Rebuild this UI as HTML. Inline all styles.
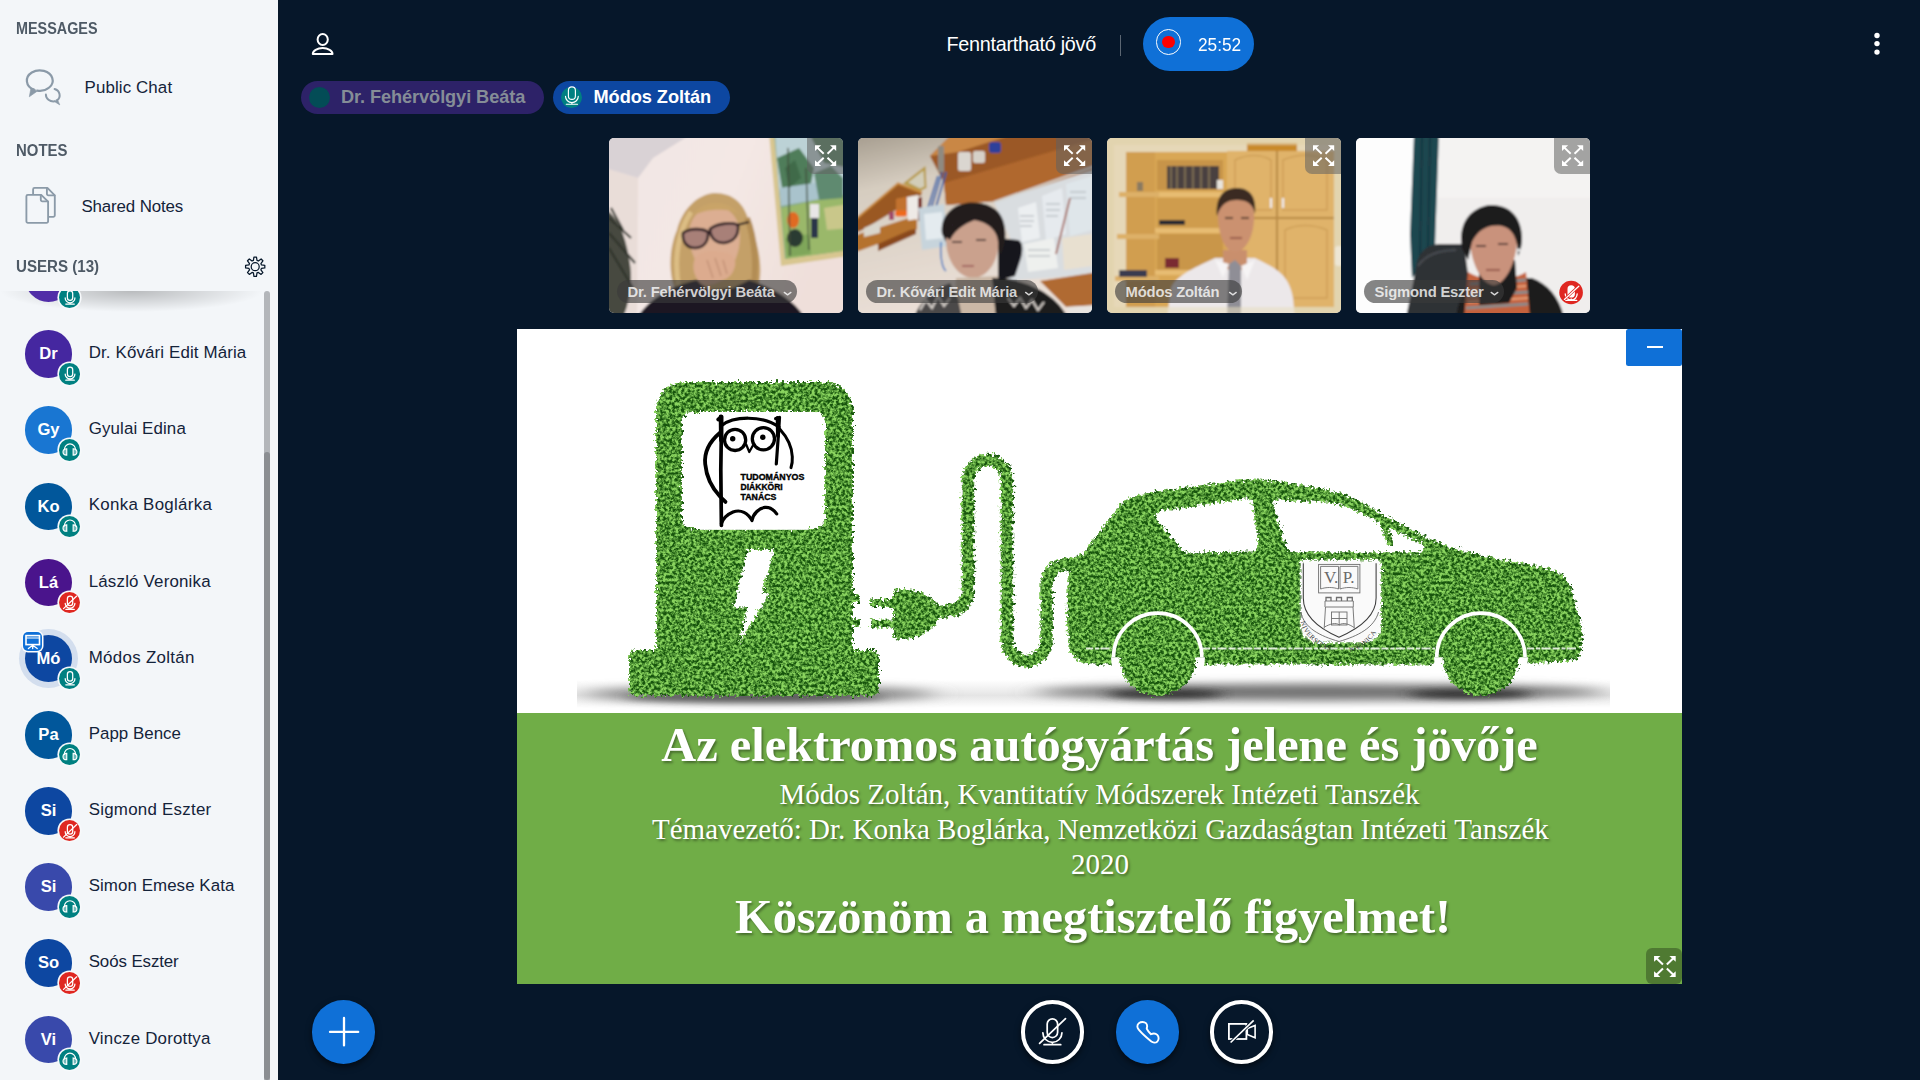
<!DOCTYPE html>
<html lang="hu"><head><meta charset="utf-8"><title>Fenntartható jövő</title>
<style>
*{box-sizing:border-box;margin:0;padding:0}
html,body{width:1920px;height:1080px;overflow:hidden;background:#06172A;font-family:"Liberation Sans",sans-serif}
.t{position:absolute;white-space:nowrap;transform-origin:0 50%;line-height:1}
.sans{font-family:"Liberation Sans",sans-serif}
.serif{font-family:"Liberation Serif",serif}
.abs{position:absolute}
#side{position:absolute;left:0;top:0;width:278px;height:1080px;background:#f3f6f9;overflow:hidden}
#ulist{position:absolute;left:0;top:291px;width:278px;height:789px;overflow:hidden;background:radial-gradient(farthest-side at 50% 0,rgba(0,0,0,.24),rgba(0,0,0,0)) 0 0/263px 21px no-repeat}
.av{position:absolute;left:24.75px;width:47.5px;height:47.5px;border-radius:50%;color:#fff;font-weight:700;font-size:16.6px;line-height:47.5px;text-align:center}
.bd{position:absolute;left:58.85px;width:21.4px;height:21.4px;border-radius:50%;box-shadow:0 0 0 1.6px #f7f9fb}
.teal{background:#008081}.red{background:#df2721}
.ab{position:absolute;top:1000.25px;width:63.3px;height:63.3px;border-radius:50%;box-shadow:0 3px 6px rgba(0,0,0,.55)}
.vid{position:absolute;top:138px;width:234px;height:175px;border-radius:5px;overflow:hidden}
.vid svg{position:absolute;left:0;top:0}
.fsb{position:absolute;right:0;top:0;width:36px;height:36px;background:rgba(96,96,96,.55);border-radius:0 0 0 7px}
.tag{position:absolute;left:8px;top:141.9px;height:23.5px;border-radius:12px;background:rgba(58,58,58,.62)}
#ovl{position:absolute;left:0;top:0;pointer-events:none}
</style></head><body>
<div id="side">
<div class="t sans" style="left:15.80px;top:21px;font-size:16.8px;font-weight:700;color:#4e5a66;transform:scaleX(0.857);">MESSAGES</div><div class="t sans" style="left:84.60px;top:80px;font-size:16.9px;font-weight:400;color:#14233a;letter-spacing:0.11px;">Public Chat</div><div class="t sans" style="left:15.80px;top:143px;font-size:16.8px;font-weight:700;color:#4e5a66;transform:scaleX(0.89);">NOTES</div><div class="t sans" style="left:81.40px;top:199px;font-size:16.9px;font-weight:400;color:#14233a;letter-spacing:-0.13px;">Shared Notes</div><div class="t sans" style="left:15.80px;top:259px;font-size:16.8px;font-weight:700;color:#4e5a66;transform:scaleX(0.9);">USERS (13)</div>
<div id="ulist">
<div class="av" style="top:-36.90px;background:#512da8"></div><div class="bd teal" style="top:-3.95px"></div>
<div class="av" style="top:39.25px;background:#4527a0">Dr</div><div class="bd teal" style="top:72.20px"></div><div class="t sans" style="left:88.70px;top:54px;font-size:16.9px;font-weight:400;color:#14233a;letter-spacing:0.135px;">Dr. Kővári Edit Mária</div>
<div class="av" style="top:115.40px;background:#1976d2">Gy</div><div class="bd teal" style="top:148.35px"></div><div class="t sans" style="left:88.70px;top:130px;font-size:16.9px;font-weight:400;color:#14233a;letter-spacing:0.12px;">Gyulai Edina</div>
<div class="av" style="top:191.55px;background:#01579b">Ko</div><div class="bd teal" style="top:224.50px"></div><div class="t sans" style="left:88.70px;top:206px;font-size:16.9px;font-weight:400;color:#14233a;letter-spacing:0.3px;">Konka Boglárka</div>
<div class="av" style="top:267.70px;background:#4a148c">Lá</div><div class="bd red" style="top:300.65px"></div><div class="t sans" style="left:88.70px;top:283px;font-size:16.9px;font-weight:400;color:#14233a;letter-spacing:0.19px;">László Veronika</div>
<div class="abs" style="left:18.9px;top:338.10px;width:59px;height:59px;border-radius:50%;background:#d3deee"></div><div class="av" style="top:343.85px;background:#0d47a1">Mó</div><div class="bd teal" style="top:376.80px"></div><div class="abs" style="left:22.8px;top:340.80px;width:19.3px;height:19.3px;border-radius:5px;background:#0f70d7;box-shadow:0 0 0 1.5px #fbfcfd"></div><div class="t sans" style="left:88.70px;top:359px;font-size:16.9px;font-weight:400;color:#14233a;letter-spacing:0.3px;">Módos Zoltán</div>
<div class="av" style="top:420.00px;background:#01579b">Pa</div><div class="bd teal" style="top:452.95px"></div><div class="t sans" style="left:88.70px;top:435px;font-size:16.9px;font-weight:400;color:#14233a;letter-spacing:0.02px;">Papp Bence</div>
<div class="av" style="top:496.15px;background:#0d47a1">Si</div><div class="bd red" style="top:529.10px"></div><div class="t sans" style="left:88.70px;top:511px;font-size:16.9px;font-weight:400;color:#14233a;letter-spacing:0.25px;">Sigmond Eszter</div>
<div class="av" style="top:572.30px;background:#3949ab">Si</div><div class="bd teal" style="top:605.25px"></div><div class="t sans" style="left:88.70px;top:587px;font-size:16.9px;font-weight:400;color:#14233a;letter-spacing:0.07px;">Simon Emese Kata</div>
<div class="av" style="top:648.45px;background:#0d47a1">So</div><div class="bd red" style="top:681.40px"></div><div class="t sans" style="left:88.70px;top:663px;font-size:16.9px;font-weight:400;color:#14233a;letter-spacing:-0.1px;">Soós Eszter</div>
<div class="av" style="top:724.60px;background:#3949ab">Vi</div><div class="bd teal" style="top:757.55px"></div><div class="t sans" style="left:88.70px;top:740px;font-size:16.9px;font-weight:400;color:#14233a;letter-spacing:0.2px;">Vincze Dorottya</div>
</div>
<div class="abs" style="left:263.5px;top:291px;width:6.5px;height:789px;background:#b3b6ba;border-radius:4px 4px 0 0"></div><div class="abs" style="left:263.5px;top:452px;width:6.5px;height:628px;background:#8b8e92;border-radius:4px"></div>
</div>
<div class="t sans" style="left:946.50px;top:35px;font-size:19.8px;font-weight:400;color:#fff;letter-spacing:-0.27px;">Fenntartható jövő</div><div class="abs" style="left:1119.8px;top:35px;width:1.3px;height:21px;background:#5b6672"></div><div class="abs" style="left:1143px;top:17px;width:111px;height:54px;border-radius:27px;background:#0f70d7"></div><div class="abs" style="left:1155.5px;top:29.2px;width:25.5px;height:25.5px;border-radius:50%;border:1.6px solid #fff"></div><div class="abs" style="left:1161.8px;top:35.5px;width:12.8px;height:12.8px;border-radius:50%;background:#ff0000"></div><div class="t sans" style="left:1198.00px;top:35px;font-size:19.2px;font-weight:400;color:#fff;transform:scaleX(0.9);">25:52</div>
<div class="abs" style="left:301px;top:81px;width:243px;height:33px;border-radius:16.5px;background:#2d2268"></div><div class="abs" style="left:309px;top:87px;width:21px;height:21px;border-radius:50%;background:#034c56"></div><div class="t sans" style="left:341.00px;top:88px;font-size:18.2px;font-weight:700;color:#858d97;letter-spacing:-0.085px;">Dr. Fehérvölgyi Beáta</div><div class="abs" style="left:553px;top:81px;width:177px;height:33px;border-radius:16.5px;background:#0d47a1"></div><div class="abs" style="left:561px;top:87.3px;width:20.8px;height:20.8px;border-radius:50%;background:#008081"></div><div class="t sans" style="left:593.50px;top:88px;font-size:18.2px;font-weight:700;color:#fff;letter-spacing:-0.046px;">Módos Zoltán</div>
<div class="vid" id="v0" style="left:609px;background:#ddd"><svg width="234" height="175" viewBox="0 0 234 175"><defs><filter id="vb0" x="-5%" y="-5%" width="110%" height="110%"><feGaussianBlur stdDeviation="1.1"/></filter><linearGradient id="w0" x1="0" y1="0" x2="1" y2="0.3"><stop offset="0" stop-color="#f1e6e4"/><stop offset=".55" stop-color="#f4e8e5"/><stop offset="1" stop-color="#efdfda"/></linearGradient></defs><g filter="url(#vb0)"><rect x="-5" y="-5" width="244" height="185" fill="url(#w0)"/><path d="M-5,-5H84L44,20L29,40L-5,30Z" fill="#d9d2d5"/><path d="M-5,30L29,40L28,180L-5,180Z" fill="#e9ddd8"/><path d="M160,-5H240V118L172,128Z" fill="#d8c690"/><path d="M165,-5H240V112L176,121Z" fill="#86a98a"/><path d="M166,-5H240V40L170,52Z" fill="#bcd2d6"/><path d="M168,20L190,10L205,30L200,55L175,62Z" fill="#4f7d5a"/><path d="M200,-5L240,-5V30L215,25Z" fill="#56805e"/><path d="M172,70L240,55V112L177,121Z" fill="#9ab86a"/><path d="M170,50L240,40V56L172,68Z" fill="#a9c3cc"/><path d="M205,35L222,28L234,40V60L210,62Z" fill="#5f8a70"/><path d="M176,30L186,22L192,40L180,50Z" fill="#3f6a4a"/><path d="M215,70L240,66V90L218,92Z" fill="#c9c78a"/><path d="M176,100L200,96L202,116L178,119Z" fill="#7fa65a"/><ellipse cx="184" cy="82" rx="6" ry="8" fill="#e06a22"/><ellipse cx="186" cy="100" rx="8" ry="9" fill="#2c3a30"/><rect x="201" y="66" width="9" height="14" fill="#e9e6e6"/><rect x="202" y="80" width="7" height="20" fill="#2b3448"/><path d="M179,10L181,118M197,30L200,112" stroke="#3f4a3a" stroke-width="1.3" fill="none"/><path d="M-5,70C8,78 16,95 20,120C24,140 22,160 14,180H-5Z" fill="#474a40"/><path d="M0,80L22,100M0,95L26,125M0,110L24,150M2,70L14,92" stroke="#2f332b" stroke-width="2.2" fill="none"/><path d="M70,160C58,140 60,110 68,92C73,72 88,56 106,55C124,55 136,66 140,84C147,100 153,120 151,140C150,150 148,156 145,160Z" fill="#c4a068"/><path d="M70,150C64,120 70,92 82,74" stroke="#dcbd84" stroke-width="5" fill="none"/><path d="M138,80C146,100 148,130 144,152" stroke="#b38d55" stroke-width="6" fill="none"/><path d="M80,96C80,80 92,68 106,68C120,68 131,80 131,98C131,118 122,136 108,138C93,138 80,118 80,96Z" fill="#dcae92"/><path d="M84,78C92,62 118,60 130,76C120,70 96,70 84,78Z" fill="#c9a468"/><path d="M74,95C80,90 94,90 99,94C100,104 94,110 86,110C78,110 73,104 74,95Z" fill="#a88078" stroke="#2a1c24" stroke-width="2.6"/><path d="M101,91C108,85 124,84 129,87C130,98 124,104 115,105C107,105 101,100 101,91Z" fill="#a88078" stroke="#2a1c24" stroke-width="2.6"/><path d="M128,87L140,84" stroke="#241820" stroke-width="2"/><path d="M28,180C40,160 66,146 88,142L100,152L124,150L140,142C160,148 184,160 196,180Z" fill="#1d1822"/><path d="M86,120C92,112 104,112 112,114C122,114 128,120 126,128C124,136 120,140 114,142C106,146 98,150 92,146C86,140 82,130 86,120Z" fill="#dcab8e"/><path d="M98,122L104,140M106,120L112,138M114,122L118,136" stroke="#c08f74" stroke-width="1.2" fill="none"/></g></svg><div class="fsb"></div><div class="tag" style="width:179.7px"></div><div class="t sans" style="left:18.60px;top:147px;font-size:14.8px;font-weight:700;color:rgba(255,255,255,.78);letter-spacing:-0.2px;">Dr. Fehérvölgyi Beáta</div></div>
<div class="vid" id="v1" style="left:858px;background:#ddd"><svg width="234" height="175" viewBox="0 0 234 175"><defs><filter id="vb1" x="-5%" y="-5%" width="110%" height="110%"><feGaussianBlur stdDeviation="1.0"/></filter><linearGradient id="w1" x1="0" y1="0" x2="0.3" y2="1"><stop offset="0" stop-color="#a39a8c"/><stop offset=".3" stop-color="#d6cdc0"/><stop offset="1" stop-color="#ebe0d8"/></linearGradient></defs><g filter="url(#vb1)"><rect x="-5" y="-5" width="244" height="185" fill="url(#w1)"/><path d="M136,64L240,30V136L150,143L152,100Z" fill="#d9dde0"/><path d="M160,70L178,64L182,100L164,104Z" fill="#eceff1"/><path d="M184,58L204,50L208,96L188,102Z" fill="#e6eaee"/><path d="M208,46L234,38V92L212,98Z" fill="#dfe6ea"/><path d="M166,106L196,100L200,130L170,134Z" fill="#eef0ee"/><path d="M204,100L234,96V128L206,132Z" fill="#e8e0d0"/><path d="M212,60L198,116" stroke="#9a4a3a" stroke-width="1.5"/><path d="M162,78h14M162,83h14M162,88h12M188,66h14M188,72h14M188,78h12M212,54h16M212,60h16M170,112h22M170,118h22" stroke="#a9b0b6" stroke-width="1"/><path d="M72,18L92,-2H240V30L138,63L88,67L86,45Z" fill="#9b5926"/><path d="M86,45L240,0V30L138,63L88,67Z" fill="#b0682e"/><path d="M72,18L92,-2H150L100,14Z" fill="#c98744"/><path d="M136,64L240,27" stroke="#d5d2cc" stroke-width="2"/><rect x="100" y="14" width="13" height="19" rx="2" fill="#dad6d0"/><rect x="115" y="13" width="12" height="12" rx="2" fill="#d6d0c8"/><rect x="131" y="4" width="12" height="11" rx="3" fill="#2e3f9a"/><rect x="80" y="8" width="6" height="26" fill="#8f8a80"/><path d="M45,45.5L67.5,28L68.5,50L62,53Z" fill="#b79a44"/><path d="M50,44.5L65.5,32.5L66.5,48.5L62,50.5Z" fill="#d2cdb8"/><path d="M-2,81L40,45.4L64,54.6L63,57.5L39,61L38,72L8,90L-2,95Z" fill="#9a5822"/><path d="M-2,81L40,45.4L64,54.6" stroke="#c98a3c" stroke-width="2.2" fill="none"/><path d="M38,61L49,58.5V77L38,72.5Z" fill="#c2722e"/><path d="M-2,97L54,79L59,82V91L52,96L20,113V106L-2,114Z" fill="#b5722f"/><path d="M20,106L52,92L58,91V96L20,113Z" fill="#8a4a1e"/><rect x="37" y="72.5" width="12" height="6" rx="2" fill="#ef6a1c"/><rect x="31" y="74" width="5" height="8" fill="#a04a6a"/><path d="M6,90L22,83V95L6,99Z" fill="#d9d6cc"/><path d="M49,59L60,57V81L50,82.5Z" fill="#eeeae6"/><path d="M60,60L64,59V82L60,83Z" fill="#7a2a20"/><path d="M84,34L72,74M88,34L76,76M80,38L70,70" stroke="#2f5fa8" stroke-width="1.8" fill="none"/><path d="M60,70L86,66L90,108L64,112Z" fill="#c7d4dc"/><path d="M66,76L84,74L86,100L68,102Z" fill="#e4ebef"/><path d="M83,104C82,118 84,130 88,133" stroke="#2f6fc0" stroke-width="1.4" fill="none"/><path d="M140,100L160,102C165,104 165,112 163,120L157,138L140,143Z" fill="#15151a"/><path d="M84,96C82,80 92,68 108,65C124,63 140,68 145,82C149,94 148,108 142,118L138,100C134,88 124,82 110,84C98,86 90,92 88,104Z" fill="#211d1f"/><path d="M88,102C88,90 98,82 112,82C126,82 139,90 140,104C141,120 132,138 116,140C100,140 88,122 88,102Z" fill="#caa18d"/><path d="M86,98C92,84 108,78 122,80C110,84 98,90 92,102Z" fill="#211d1f"/><path d="M94,104h10M118,102h10" stroke="#3a2a2a" stroke-width="1.6"/><path d="M104,128h12" stroke="#9a5a58" stroke-width="1.6"/><path d="M98,140L140,138L150,180H96Z" fill="#cbb8a6"/><path d="M56,180C60,165 76,150 92,145L100,160L104,180Z" fill="#4c4848"/><path d="M134,140L150,141C172,145 198,156 210,180H138Z" fill="#1c1a1d"/><path d="M62,172l6,-10l6,8l6,-12l6,10l6,-8M150,160l6,8l6,-8l6,10l6,-8l6,10l6,-8" stroke="#d8d2cc" stroke-width="2" fill="none"/><path d="M182,143L240,134V167L208,169Z" fill="#b06a30"/><path d="M208,169L240,167V180H215Z" fill="#e8e4e0"/></g></svg><div class="fsb"></div><div class="tag" style="width:172px"></div><div class="t sans" style="left:18.60px;top:147px;font-size:14.8px;font-weight:700;color:rgba(255,255,255,.78);letter-spacing:-0.2px;">Dr. Kővári Edit Mária</div></div>
<div class="vid" id="v2" style="left:1107px;background:#ddd"><svg width="234" height="175" viewBox="0 0 234 175"><defs><filter id="vb2" x="-5%" y="-5%" width="110%" height="110%"><feGaussianBlur stdDeviation="1.0"/></filter></defs><g filter="url(#vb2)"><rect x="-5" y="-5" width="244" height="185" fill="#dcc99c"/><rect x="7" y="7" width="220" height="162" fill="#e6d8b8"/><rect x="19" y="14" width="101" height="155" fill="#d9a755"/><rect x="50" y="22" width="66" height="30" fill="#c79448"/><rect x="60" y="28" width="52" height="23" fill="#4a4040"/><path d="M64,28v23M70,28v23M78,28v23M86,28v23M94,28v23M102,28v23" stroke="#8a7a5a" stroke-width="1.5"/><rect x="110" y="42" width="6" height="9" fill="#e8e4dc"/><rect x="19" y="54" width="101" height="5" fill="#e7bc72"/><rect x="19" y="90" width="101" height="5" fill="#e7bc72"/><rect x="19" y="132" width="101" height="5" fill="#e7bc72"/><rect x="50" y="60" width="66" height="30" fill="#cf9c4e"/><rect x="50" y="96" width="66" height="36" fill="#c9964a"/><path d="M19,14H48V169H19Z" fill="#d19e50"/><rect x="12" y="54" width="40" height="5" fill="#ddb068"/><rect x="10" y="96" width="42" height="5" fill="#ddb068"/><rect x="8" y="138" width="44" height="5" fill="#ddb068"/><rect x="52" y="82" width="26" height="5" fill="#2a2a30"/><rect x="58" y="120" width="14" height="10" fill="#7a2a30"/><rect x="12" y="132" width="28" height="7" fill="#3a3a50"/><rect x="30" y="44" width="6" height="9" fill="#8a7a60"/><rect x="120" y="13" width="107" height="156" fill="#e0b36a"/><path d="M170,13V169M120,80H227" stroke="#b98a45" stroke-width="2"/><path d="M128,22C140,16 154,16 164,22V72H128Z" fill="none" stroke="#cfa058" stroke-width="1.5"/><path d="M176,22C190,16 206,16 220,22V72H176Z" fill="none" stroke="#cfa058" stroke-width="1.5"/><path d="M178,92C190,86 206,86 220,92V160H178Z" fill="none" stroke="#cfa058" stroke-width="1.5"/><rect x="140" y="5" width="50" height="8" fill="#c98a2c"/><path d="M164,60v10M176,60v10" stroke="#f0f0f0" stroke-width="2"/><path d="M60,180L64,150C70,136 92,128 108,120L148,120C168,130 182,136 186,160L188,180Z" fill="#ece8ea"/><path d="M116,112H140V128L128,136L116,128Z" fill="#c98f6d"/><path d="M111,80C110,64 118,54 129,54C141,54 148,64 147,82C146,100 138,114 128,114C118,114 112,98 111,80Z" fill="#cb9170"/><path d="M110,78C108,60 116,50 130,50C142,50 150,58 148,76C146,66 140,62 130,62C120,62 114,66 110,78Z" fill="#3a2a22"/><path d="M118,80h8M134,80h8" stroke="#3a2a22" stroke-width="1.5"/><path d="M123,100h12" stroke="#8a4a40" stroke-width="1.5"/><path d="M122,126L128,122L134,128L134,180H120Z" fill="#8f8e96"/><path d="M108,122L122,126L116,140ZM148,122L134,128L140,142Z" fill="#f6f4f5"/><rect x="228" y="108" width="8" height="20" rx="3" fill="#f4f2ee"/><path d="M-5,-5H239V180H-5ZM7,7V169H227V7Z" fill="#e8dcc0" fill-opacity=".55" fill-rule="evenodd"/></g></svg><div class="fsb"></div><div class="tag" style="width:127px"></div><div class="t sans" style="left:18.60px;top:147px;font-size:14.8px;font-weight:700;color:rgba(255,255,255,.78);letter-spacing:-0.2px;">Módos Zoltán</div></div>
<div class="vid" id="v3" style="left:1356px;background:#ddd"><svg width="234" height="175" viewBox="0 0 234 175"><defs><filter id="vb3" x="-5%" y="-5%" width="110%" height="110%"><feGaussianBlur stdDeviation="1.0"/></filter></defs><g filter="url(#vb3)"><rect x="-5" y="-5" width="244" height="185" fill="#f0eeed"/><rect x="-5" y="-5" width="66" height="185" fill="#fdfdfd"/><path d="M82,-5H240V60H82Z" fill="#f4f3f2"/><path d="M58,-5H83L79,109L56,140L54,96Z" fill="#1f4650"/><path d="M66,-5L64,120M74,-5L72,112" stroke="#173840" stroke-width="2"/><path d="M50,180L61,124C64,112 74,106 84,106H108L118,180Z" fill="#2e3236"/><path d="M62,128C70,116 84,112 100,112" stroke="#4a4e52" stroke-width="2" fill="none"/><path d="M100,180C102,160 110,146 124,140H176C192,146 204,160 208,180Z" fill="#1b1b1e"/><path d="M112,134C124,142 150,146 170,134L174,180H108Z" fill="#c4623c"/><path d="M114,146L170,142M112,158L172,154M110,170L172,166" stroke="#8a8a8a" stroke-width="3"/><path d="M116,152L170,148M112,164L172,160" stroke="#e6a07a" stroke-width="2"/><path d="M123,122H159L161,150L153,165L123,167Z" fill="#1a1a1d"/><path d="M114,100C114,86 124,78 138,78C152,78 162,88 161,104C160,124 150,146 138,147C124,146 114,122 114,100Z" fill="#c9927b"/><path d="M106,110C102,88 112,70 134,67C154,66 166,80 166,100C166,108 164,114 162,118C162,100 156,90 146,88C132,86 122,92 116,104L112,122Z" fill="#1c1a1c"/><path d="M120,108h10M142,106h10" stroke="#3a2626" stroke-width="1.6"/><path d="M130,132h14" stroke="#8a4a44" stroke-width="1.6"/><circle cx="163" cy="112" r="1.6" fill="#f4f4f4"/></g></svg><div class="fsb"></div><div class="tag" style="width:139.6px"></div><div class="t sans" style="left:18.60px;top:147px;font-size:14.8px;font-weight:700;color:rgba(255,255,255,.78);letter-spacing:-0.2px;">Sigmond Eszter</div></div>
<div class="abs" id="slide" style="left:517px;top:329px;width:1165px;height:655px;background:#fff;overflow:hidden">
<svg class="abs" style="left:0;top:0" width="1165" height="384" viewBox="517 329 1165 384">
<defs>
<filter id="grass" x="-3%" y="-6%" width="106%" height="112%" color-interpolation-filters="sRGB">
<feTurbulence type="fractalNoise" baseFrequency="0.33" numOctaves="3" seed="7" result="n"/>
<feDisplacementMap in="SourceGraphic" in2="n" scale="9" xChannelSelector="R" yChannelSelector="G" result="d"/>
<feComponentTransfer in="n" result="n2"><feFuncR type="linear" slope="3" intercept="-1"/><feFuncG type="linear" slope="3" intercept="-1"/></feComponentTransfer>
<feColorMatrix in="n2" type="matrix" values="0.45 0 0 0 0.09  0.50 0 0 0 0.33  0.32 0 0 0 0.05  0 0 0 0 1" result="c"/>
<feComposite in="c" in2="d" operator="in"/>
</filter>
<filter id="blur8" x="-10%" y="-100%" width="120%" height="300%"><feGaussianBlur stdDeviation="14 5"/></filter>
<filter id="blur3" x="-10%" y="-100%" width="120%" height="300%"><feGaussianBlur stdDeviation="8 3"/></filter>
<linearGradient id="band" x1="0" y1="0" x2="0" y2="1"><stop offset="0" stop-color="#bbb" stop-opacity="0"/><stop offset=".55" stop-color="#bbb" stop-opacity=".38"/><stop offset="1" stop-color="#bbb" stop-opacity="0"/></linearGradient>
<clipPath id="imgclip"><rect x="577" y="329" width="1033" height="384"/></clipPath>
</defs>
<g clip-path="url(#imgclip)">
<rect x="577" y="680" width="1033" height="28" fill="url(#band)"/>
<ellipse cx="760" cy="694" rx="175" ry="8" fill="#8a8a8a" filter="url(#blur8)"/>
<ellipse cx="1320" cy="692" rx="285" ry="8" fill="#707070" filter="url(#blur8)"/>
<ellipse cx="1165" cy="694" rx="58" ry="4.5" fill="#333" filter="url(#blur3)"/>
<ellipse cx="1470" cy="694" rx="62" ry="4.5" fill="#333" filter="url(#blur3)"/>
<ellipse cx="755" cy="697" rx="130" ry="4.5" fill="#555" filter="url(#blur3)"/>
</g>
<g filter="url(#grass)" fill="#3f8f25" stroke="none">
<path fill-rule="evenodd" d="M656,650V410a28,28 0 0 1 28,-28H825a28,28 0 0 1 28,28V650H872a7,7 0 0 1 7,7V689a7,7 0 0 1 -7,7H636a7,7 0 0 1 -7,-7V657a7,7 0 0 1 7,-7ZM691,412a9,9 0 0 0 -9,9V519a9,9 0 0 0 9,9H816a9,9 0 0 0 9,-9V421a9,9 0 0 0 -9,-9ZM747.5,550H774L761.5,593.5L769,593.5L739,644L747.5,607.5L733.5,607.5Z"/>
<rect x="852" y="594" width="8" height="8" rx="2"/><rect x="852" y="619" width="8" height="8" rx="2"/>
<rect x="870" y="599" width="30" height="8" rx="3"/><rect x="870" y="619.5" width="30" height="8" rx="3"/>
<path d="M893,593C893,590 897,589 903,589C922,589 938,600 940,612C940,626 922,639 903,639C897,639 893,638 893,635Z"/>
<path d="M934,612C950,612 968,610 968,590V481a19.5,21 0 0 1 39,0V640a19.8,21 0 0 0 39.6,0V585a21,21 0 0 1 21,-21H1085" fill="none" stroke="#3f8f25" stroke-width="12.5" stroke-linecap="round"/>
<path fill-rule="evenodd" d="M1069,644C1066,620 1066,590 1070,570C1072,560 1076,556 1084,552L1120,505C1128,497 1140,494 1152,492L1236,480.6C1250,479 1262,479 1275,480.5L1327,489.5C1350,495 1368,505 1385,515.8L1429,539C1450,548 1468,552 1487.5,556.5L1546,568C1562,572 1568,578 1571,588L1579,616C1582,626 1583,634 1582.3,641C1582,652 1580,658 1574,660L1523,664.5H1090C1078,663 1070,656 1069,644ZM1161,511L1245,498.5C1250,498 1252,500 1252.5,504L1258,544C1258.5,549 1256,551 1252,551.5L1190,552.5C1185,552.5 1182,550 1179,546L1157,520C1154,516 1156,512 1161,511ZM1278,499.5L1330,502.7C1345,505 1365,514 1382.5,524.6L1420,543C1426,546 1424,552 1418,552.3H1293C1289,552 1287,550 1286,546L1273.5,506C1272.5,502 1274,499.5 1278,499.5ZM1301,560H1381V626C1381,636 1372,642 1362,642H1320C1310,642 1301,636 1301,626Z"/>
</g>
<g fill="none" stroke="#fff" stroke-width="3.6"><path d="M1113.5,657.3A44.2,44.2 0 0 1 1201.9,657.3"/><path d="M1436.7,657.3A44.2,44.2 0 0 1 1525.1,657.3"/></g>
<path d="M1086,648.5H1112M1203,648.5H1435M1527,648.5H1578" stroke="#fff" stroke-opacity=".8" stroke-width="2.2" stroke-dasharray="7 2 4 1.5 9 2" fill="none"/>
<g fill="#fff"><path d="M1111,657.3A47,47 0 0 0 1113,670H1203A47,47 0 0 0 1205,657.3Z"/><path d="M1434,657.3A47,47 0 0 0 1436,670H1526A47,47 0 0 0 1528,657.3Z"/></g>
<g filter="url(#grass)" fill="#3f8f25"><circle cx="1157.9" cy="657.3" r="38.6"/><circle cx="1480.9" cy="657.3" r="38.3"/></g>
<g filter="url(#grass)"><path d="M1381,519L1392,546" stroke="#3f8f25" stroke-width="7" fill="none"/></g>
<g fill="none" stroke="#000" stroke-linecap="round" stroke-linejoin="round"><rect x="700" y="412" width="108.6" height="117.8" fill="#fff" stroke="none"/><path d="M718.2,419.5L721.6,416.6L720.8,470L721.4,525.4" stroke-width="3.7"/><path d="M720.9,416.8L721.2,440" stroke-width="4.4"/><path d="M720,432.7C709,442 704,452 705.2,464C706.5,478 713,489 720,496.5L725.5,501.9" stroke-width="3.8"/><path d="M721.3,425.8C733,416 762,415 779,427" stroke-width="3.2"/><path d="M775.6,418.5L779.5,417.5L778.6,432L776.3,464" stroke-width="3.2"/><path d="M777.6,418L777.9,436" stroke-width="3.8"/><path d="M779.7,429C787,437 792,447 792.3,456.8C792.5,461 792,465 791,467.6" stroke-width="3"/><circle cx="735.1" cy="439.9" r="10.6" stroke-width="3.3"/><circle cx="763.4" cy="438.7" r="11.1" stroke-width="3.3"/><circle cx="732.7" cy="438.7" r="2.7" fill="#000" stroke="none"/><circle cx="762.8" cy="437.3" r="2.7" fill="#000" stroke="none"/><path d="M746.2,444.5L749.3,452L752.6,446" stroke-width="2.2"/><path d="M721.5,523.6C723,519 727,514.5 733,512C741,509 748,513 752,520.6C753,514 759,508 765,507.4C770,507 774,510 776.7,513.9" stroke-width="3.2"/></g><g font-family="Liberation Sans, sans-serif" font-weight="700" font-size="8.2" fill="#000" stroke="#000" stroke-width=".35"><text x="740.6" y="480.2" textLength="63.8" lengthAdjust="spacingAndGlyphs">TUDOMÁNYOS</text><text x="740.6" y="490.2" textLength="42.1" lengthAdjust="spacingAndGlyphs">DIÁKKÖRI</text><text x="740.6" y="499.9" textLength="35.8" lengthAdjust="spacingAndGlyphs">TANÁCS</text></g><defs><filter id="sb" x="-10%" y="-10%" width="120%" height="120%"><feGaussianBlur stdDeviation="1.6"/></filter><path id="arcL" d="M1300.5,622C1306,640 1322,649 1339,654"/><path id="arcR" d="M1350,652C1364,648 1376,638 1380,622"/></defs><path d="M1301,561H1380V626C1380,636 1372,642 1362,642H1320C1310,642 1301,636 1301,626Z" fill="#fafafa" filter="url(#sb)"/><g fill="none" stroke="#3c3c3c" stroke-width="1.05"><path d="M1303.3,563.3V598C1303.3,616 1320,629 1339,637.2C1358,629 1376.1,616 1376.1,598V563.3"/><path d="M1300.8,612C1304,628 1320,636 1339,641.5C1358,636 1374,628 1378.6,612" stroke-width=".8" stroke="#555"/></g><g fill="none" stroke="#6e6e6e" stroke-width=".9"><rect x="1318.6" y="564.4" width="41.3" height="28.5"/><path d="M1320.6,566.4H1338.5V589C1333,587 1326,587 1320.6,589ZM1357.9,566.4H1340V589C1346,587 1352,587 1357.9,589Z"/><path d="M1324.2,628.5L1325.5,607H1353L1354.3,628.5"/><path d="M1325,607V601H1353.3V607"/><path d="M1326,601V597.5H1331V601M1336.5,601V597.5H1341.5V601M1347.3,601V597.5H1352.3V601" stroke-width="1.3"/><rect x="1331.5" y="612" width="15.5" height="13"/><path d="M1339.2,612V625M1331.5,618.5H1347"/><path d="M1324.5,627C1330,624 1336,622 1339.2,625C1343,622 1349,624 1354,627.5"/></g><g font-family="Liberation Serif, serif" fill="#6a6a6a"><text x="1324" y="583.2" font-size="16.6" textLength="30.5" lengthAdjust="spacingAndGlyphs">V. P.</text><text font-size="6.6" fill="#3a3a3a" letter-spacing=".5"><textPath href="#arcL">NIVERSITAS</textPath></text><text font-size="6.6" fill="#3a3a3a" letter-spacing=".5"><textPath href="#arcR">NNONICA</textPath></text></g>
</svg>
<div class="abs" style="left:0;top:384px;width:1165px;height:271px;background:#70ad47"></div>
<div class="t serif" style="left:144.20px;top:392px;font-size:48.4px;font-weight:700;color:#fff;text-shadow:1.5px 1.5px 2.5px rgba(0,0,0,.38);">Az elektromos autógyártás jelene és jövője</div><div class="t serif" style="left:262.50px;top:451px;font-size:29px;font-weight:400;color:#fff;text-shadow:1.5px 1.5px 2.5px rgba(0,0,0,.38);">Módos Zoltán, Kvantitatív Módszerek Intézeti Tanszék</div><div class="t serif" style="left:135.00px;top:486px;font-size:29px;font-weight:400;color:#fff;text-shadow:1.5px 1.5px 2.5px rgba(0,0,0,.38);">Témavezető: Dr. Konka Boglárka, Nemzetközi Gazdaságtan Intézeti Tanszék</div><div class="t serif" style="left:554.00px;top:521px;font-size:29px;font-weight:400;color:#fff;text-shadow:1.5px 1.5px 2.5px rgba(0,0,0,.38);">2020</div><div class="t serif" style="left:218.00px;top:564px;font-size:48.4px;font-weight:700;color:#fff;text-shadow:1.5px 1.5px 2.5px rgba(0,0,0,.38);">Köszönöm a megtisztelő figyelmet!</div>
<div class="abs" style="left:1109px;top:0;width:56px;height:37px;background:#0f70d7;border-radius:2.5px"><div class="abs" style="left:21px;top:17.1px;width:16px;height:2px;background:#fff"></div></div>
<div class="abs" style="left:1129px;top:619px;width:36px;height:36px;background:rgba(0,0,0,.29);border-radius:6px"></div>
</div>
<div class="ab" style="left:311.85px;background:#0f70d7"></div><div class="ab" style="left:1020.85px;border:4px solid #fff"></div><div class="ab" style="left:1115.85px;background:#0f70d7"></div><div class="ab" style="left:1209.85px;border:4px solid #fff"></div>
<svg id="ovl" width="1920" height="1080" viewBox="0 0 1920 1080"><defs><clipPath id="cl"><rect x="0" y="291" width="263" height="789"/></clipPath></defs>
<g fill="none" stroke="#8b9aa8" stroke-width="2.2" stroke-linecap="round"><path d="M33.8,89.6A12.9,10.2 0 1 1 37.5,90.6"/><path d="M30.9,88.2L29.3,96.8L37.6,90.9Z" fill="#8b9aa8" stroke-width="0.6" stroke-linejoin="round"/><path d="M54.6,89.0A7.3,6.6 0 0 1 57.2,100.2M54.6,101.3A7.6,6.6 0 0 1 45.9,94.6" stroke-width="2"/><path d="M57.4,99.4L59.8,104.9L54.4,101.6Z" fill="#8b9aa8" stroke-width="0.6" stroke-linejoin="round"/></g>
<g fill="none" stroke="#8b9aa8" stroke-width="1.85" stroke-linejoin="round" stroke-linecap="round"><path d="M41.2,194.8H27.9a1.5,1.5 0 0 0 -1.5,1.5V221.3a1.5,1.5 0 0 0 1.5,1.5H46.6a1.5,1.5 0 0 0 1.5,-1.5V201.7Z"/><path d="M40.8,195.2V199.8a1.5,1.5 0 0 0 1.5,1.5H47.8"/><path d="M33.1,194V189.4a1.5,1.5 0 0 1 1.5,-1.5H47.4L54.8,195.3V215.3a1.5,1.5 0 0 1 -1.5,1.5H49"/><path d="M46.9,188.3V193.8a1.5,1.5 0 0 0 1.5,1.5H54.5"/></g>
<path d="M253.41,260.45L253.93,257.08L256.47,257.08L256.99,260.45L258.35,261.01L261.1,259L262.9,260.8L260.89,263.55L261.45,264.91L264.82,265.43L264.82,267.97L261.45,268.49L260.89,269.85L262.9,272.6L261.1,274.4L258.35,272.39L256.99,272.95L256.47,276.32L253.93,276.32L253.41,272.95L252.05,272.39L249.3,274.4L247.5,272.6L249.51,269.85L248.95,268.49L245.58,267.97L245.58,265.43L248.95,264.91L249.51,263.55L247.5,260.8L249.3,259L252.05,261.01Z" fill="none" stroke="#06172A" stroke-width="1.25" stroke-linejoin="round"/><circle cx="255.2" cy="266.7" r="4" fill="none" stroke="#06172A" stroke-width="1.25"/>
<g clip-path="url(#cl)"><g transform="translate(70.05,290.45) scale(0.76)" fill="none" stroke="#fff" stroke-width="1.65" stroke-linecap="round"><rect x="-3.5" y="0.6" width="7" height="12.5" rx="3.5"/><path d="M-6.4,9.9A6.4,6.4 0 0 0 6.4,9.9M0,16.3V17.9M-5.6,17.9H5.6"/></g></g>
<g transform="translate(70.05,366.6) scale(0.76)" fill="none" stroke="#fff" stroke-width="1.65" stroke-linecap="round"><rect x="-3.5" y="0.6" width="7" height="12.5" rx="3.5"/><path d="M-6.4,9.9A6.4,6.4 0 0 0 6.4,9.9M0,16.3V17.9M-5.6,17.9H5.6"/></g>
<g transform="translate(69.95,450.05)" fill="none" stroke="#fff" stroke-width="1.15" stroke-linecap="round"><path d="M-5.6,-0.3A5.6,5.9 0 0 1 5.6,-0.3"/><path d="M-3.2,-1.3C-8.2,-1 -8.2,5 -3.2,5.1Z" fill="rgba(255,255,255,.45)"/><path d="M3.2,-1.3C8.2,-1 8.2,5 3.2,5.1Z" fill="rgba(255,255,255,.45)"/></g>
<g transform="translate(69.95,526.2)" fill="none" stroke="#fff" stroke-width="1.15" stroke-linecap="round"><path d="M-5.6,-0.3A5.6,5.9 0 0 1 5.6,-0.3"/><path d="M-3.2,-1.3C-8.2,-1 -8.2,5 -3.2,5.1Z" fill="rgba(255,255,255,.45)"/><path d="M3.2,-1.3C8.2,-1 8.2,5 3.2,5.1Z" fill="rgba(255,255,255,.45)"/></g>
<g transform="translate(70.05,595.75) scale(0.76)" fill="none" stroke="#fff" stroke-width="1.65" stroke-linecap="round"><rect x="-3.5" y="0.6" width="7" height="12.5" rx="3.5"/><path d="M-6.4,9.9A6.4,6.4 0 0 0 6.4,9.9M0,16.3V17.9M-5.6,17.9H5.6"/><path d="M8.8,0.4L-8.6,17"/></g>
<g transform="translate(70.05,671.2) scale(0.76)" fill="none" stroke="#fff" stroke-width="1.65" stroke-linecap="round"><rect x="-3.5" y="0.6" width="7" height="12.5" rx="3.5"/><path d="M-6.4,9.9A6.4,6.4 0 0 0 6.4,9.9M0,16.3V17.9M-5.6,17.9H5.6"/></g>
<g transform="translate(22.8,631.8)" fill="none" stroke="#fff" stroke-linecap="round"><rect x="3.2" y="3.8" width="13.5" height="9" stroke-width="1.6"/><path d="M3.5,6.2H16.3" stroke-width="1.1"/><path d="M9.9,13.4L5.6,16.8M9.9,13.4V16.8M9.9,13.4L14.4,16.8" stroke-width="1.3"/></g>
<g transform="translate(69.95,754.65)" fill="none" stroke="#fff" stroke-width="1.15" stroke-linecap="round"><path d="M-5.6,-0.3A5.6,5.9 0 0 1 5.6,-0.3"/><path d="M-3.2,-1.3C-8.2,-1 -8.2,5 -3.2,5.1Z" fill="rgba(255,255,255,.45)"/><path d="M3.2,-1.3C8.2,-1 8.2,5 3.2,5.1Z" fill="rgba(255,255,255,.45)"/></g>
<g transform="translate(70.05,824.2) scale(0.76)" fill="none" stroke="#fff" stroke-width="1.65" stroke-linecap="round"><rect x="-3.5" y="0.6" width="7" height="12.5" rx="3.5"/><path d="M-6.4,9.9A6.4,6.4 0 0 0 6.4,9.9M0,16.3V17.9M-5.6,17.9H5.6"/><path d="M8.8,0.4L-8.6,17"/></g>
<g transform="translate(69.95,906.95)" fill="none" stroke="#fff" stroke-width="1.15" stroke-linecap="round"><path d="M-5.6,-0.3A5.6,5.9 0 0 1 5.6,-0.3"/><path d="M-3.2,-1.3C-8.2,-1 -8.2,5 -3.2,5.1Z" fill="rgba(255,255,255,.45)"/><path d="M3.2,-1.3C8.2,-1 8.2,5 3.2,5.1Z" fill="rgba(255,255,255,.45)"/></g>
<g transform="translate(70.05,976.5) scale(0.76)" fill="none" stroke="#fff" stroke-width="1.65" stroke-linecap="round"><rect x="-3.5" y="0.6" width="7" height="12.5" rx="3.5"/><path d="M-6.4,9.9A6.4,6.4 0 0 0 6.4,9.9M0,16.3V17.9M-5.6,17.9H5.6"/><path d="M8.8,0.4L-8.6,17"/></g>
<g transform="translate(69.95,1059.25)" fill="none" stroke="#fff" stroke-width="1.15" stroke-linecap="round"><path d="M-5.6,-0.3A5.6,5.9 0 0 1 5.6,-0.3"/><path d="M-3.2,-1.3C-8.2,-1 -8.2,5 -3.2,5.1Z" fill="rgba(255,255,255,.45)"/><path d="M3.2,-1.3C8.2,-1 8.2,5 3.2,5.1Z" fill="rgba(255,255,255,.45)"/></g>
<g fill="none" stroke="#fff" stroke-width="2" stroke-linejoin="round"><ellipse cx="322.7" cy="39.5" rx="5.1" ry="5.5"/><path d="M312.8,53.9A9.85,5.8 0 0 1 332.5,53.9Z"/></g>
<circle cx="1877" cy="35.5" r="2.7" fill="#fff"/>
<circle cx="1877" cy="43.6" r="2.7" fill="#fff"/>
<circle cx="1877" cy="52.1" r="2.7" fill="#fff"/>
<g transform="translate(571.9,86.3) scale(1)" fill="none" stroke="#fff" stroke-width="1.15" stroke-linecap="round"><rect x="-3.5" y="0.6" width="7" height="12.5" rx="3.5"/><path d="M-6.4,9.9A6.4,6.4 0 0 0 6.4,9.9M0,16.3V17.9M-5.6,17.9H5.6"/></g>
<g transform="translate(825.6,155.7) scale(1)" fill="#fff" stroke="#fff" stroke-width="2" stroke-linecap="butt"><path d="M-1.9,-2L-8.5,-8.3" fill="none"/><path d="M-10.6,-10.4L-4.4,-10.4L-10.6,-4.6Z" stroke="none"/><path d="M-1.9,2L-8.5,8.3" fill="none"/><path d="M-10.6,10.4L-4.4,10.4L-10.6,4.6Z" stroke="none"/><path d="M1.9,-2L8.5,-8.3" fill="none"/><path d="M10.6,-10.4L4.4,-10.4L10.6,-4.6Z" stroke="none"/><path d="M1.9,2L8.5,8.3" fill="none"/><path d="M10.6,10.4L4.4,10.4L10.6,4.6Z" stroke="none"/></g>
<path d="M784.3,292.4L787.6,294.9L790.9,292.4" fill="none" stroke="#fff" stroke-opacity=".8" stroke-width="1.4" stroke-linecap="round" stroke-linejoin="round"/>
<g transform="translate(1074.6,155.7) scale(1)" fill="#fff" stroke="#fff" stroke-width="2" stroke-linecap="butt"><path d="M-1.9,-2L-8.5,-8.3" fill="none"/><path d="M-10.6,-10.4L-4.4,-10.4L-10.6,-4.6Z" stroke="none"/><path d="M-1.9,2L-8.5,8.3" fill="none"/><path d="M-10.6,10.4L-4.4,10.4L-10.6,4.6Z" stroke="none"/><path d="M1.9,-2L8.5,-8.3" fill="none"/><path d="M10.6,-10.4L4.4,-10.4L10.6,-4.6Z" stroke="none"/><path d="M1.9,2L8.5,8.3" fill="none"/><path d="M10.6,10.4L4.4,10.4L10.6,4.6Z" stroke="none"/></g>
<path d="M1025.6,292.4L1028.9,294.9L1032.2,292.4" fill="none" stroke="#fff" stroke-opacity=".8" stroke-width="1.4" stroke-linecap="round" stroke-linejoin="round"/>
<g transform="translate(1323.6,155.7) scale(1)" fill="#fff" stroke="#fff" stroke-width="2" stroke-linecap="butt"><path d="M-1.9,-2L-8.5,-8.3" fill="none"/><path d="M-10.6,-10.4L-4.4,-10.4L-10.6,-4.6Z" stroke="none"/><path d="M-1.9,2L-8.5,8.3" fill="none"/><path d="M-10.6,10.4L-4.4,10.4L-10.6,4.6Z" stroke="none"/><path d="M1.9,-2L8.5,-8.3" fill="none"/><path d="M10.6,-10.4L4.4,-10.4L10.6,-4.6Z" stroke="none"/><path d="M1.9,2L8.5,8.3" fill="none"/><path d="M10.6,10.4L4.4,10.4L10.6,4.6Z" stroke="none"/></g>
<path d="M1229.6,292.4L1232.9,294.9L1236.2,292.4" fill="none" stroke="#fff" stroke-opacity=".8" stroke-width="1.4" stroke-linecap="round" stroke-linejoin="round"/>
<g transform="translate(1572.6,155.7) scale(1)" fill="#fff" stroke="#fff" stroke-width="2" stroke-linecap="butt"><path d="M-1.9,-2L-8.5,-8.3" fill="none"/><path d="M-10.6,-10.4L-4.4,-10.4L-10.6,-4.6Z" stroke="none"/><path d="M-1.9,2L-8.5,8.3" fill="none"/><path d="M-10.6,10.4L-4.4,10.4L-10.6,4.6Z" stroke="none"/><path d="M1.9,-2L8.5,-8.3" fill="none"/><path d="M10.6,-10.4L4.4,-10.4L10.6,-4.6Z" stroke="none"/><path d="M1.9,2L8.5,8.3" fill="none"/><path d="M10.6,10.4L4.4,10.4L10.6,4.6Z" stroke="none"/></g>
<path d="M1491.2,292.4L1494.5,294.9L1497.8,292.4" fill="none" stroke="#fff" stroke-opacity=".8" stroke-width="1.4" stroke-linecap="round" stroke-linejoin="round"/>
<circle cx="1571.1" cy="292.5" r="11.8" fill="#df2721"/>
<g transform="translate(1571.2,285.2)" stroke="#fff" fill="none" stroke-linecap="round"><rect x="-3.7" y="0" width="7.4" height="12.4" rx="3.7" fill="#fff" stroke="none"/><path d="M-6,8.6A6,6.2 0 0 0 6,8.6M0,13.6V15M-6,15.1H5.6" stroke-width="1.3"/><path d="M7.9,0.6L-7.1,14.6" stroke="#df2721" stroke-width="2.6"/><path d="M7.6,1.1L-6.8,14.2" stroke-width="1.3"/></g>
<g transform="translate(1664.9,966.5) scale(1.02)" fill="#fff" stroke="#fff" stroke-width="2" stroke-linecap="butt"><path d="M-1.9,-2L-8.5,-8.3" fill="none"/><path d="M-10.6,-10.4L-4.4,-10.4L-10.6,-4.6Z" stroke="none"/><path d="M-1.9,2L-8.5,8.3" fill="none"/><path d="M-10.6,10.4L-4.4,10.4L-10.6,4.6Z" stroke="none"/><path d="M1.9,-2L8.5,-8.3" fill="none"/><path d="M10.6,-10.4L4.4,-10.4L10.6,-4.6Z" stroke="none"/><path d="M1.9,2L8.5,8.3" fill="none"/><path d="M10.6,10.4L4.4,10.4L10.6,4.6Z" stroke="none"/></g>
<path d="M330,1031.9H358.2M344,1018V1045.4" stroke="#fff" stroke-width="2.3" stroke-linecap="round" fill="none"/>
<g transform="translate(1052.4,1018) scale(1.49)" fill="none" stroke="#fff" stroke-width="1.17" stroke-linecap="round"><rect x="-3.5" y="0.6" width="7" height="12.5" rx="3.5"/><path d="M-6.4,9.9A6.4,6.4 0 0 0 6.4,9.9M0,16.3V17.9M-5.6,17.9H5.6"/><path d="M8.8,0.4L-8.6,17"/></g>
<g transform="translate(1147.5,1031.9) scale(0.07) translate(-540,-547)"><path d="M395,470C395,430 430,405 470,405C510,405 535,435 535,465C535,485 525,490 530,505C540,530 570,560 590,580C610,570 650,560 680,590C705,615 705,660 680,685C655,710 615,700 595,685C540,640 460,570 415,515C400,495 395,485 395,470Z" fill="none" stroke="#fff" stroke-width="27" stroke-linejoin="round"/></g>
<g transform="translate(1241.5,1031.9)" fill="none" stroke="#fff" stroke-width="1.8"><rect x="-12.6" y="-8" width="17.5" height="15.1"/><path d="M5.8,-3.4L13.6,-6.4V5.8L5.8,2.6Z" stroke-width="1.6" stroke-linejoin="miter"/><path d="M12.2,-11.6L-10.9,10.6" stroke="#06172A" stroke-width="3.2"/><path d="M12.2,-11.6L-10.9,10.6" stroke-width="1.7"/></g>
</svg>
</body></html>
